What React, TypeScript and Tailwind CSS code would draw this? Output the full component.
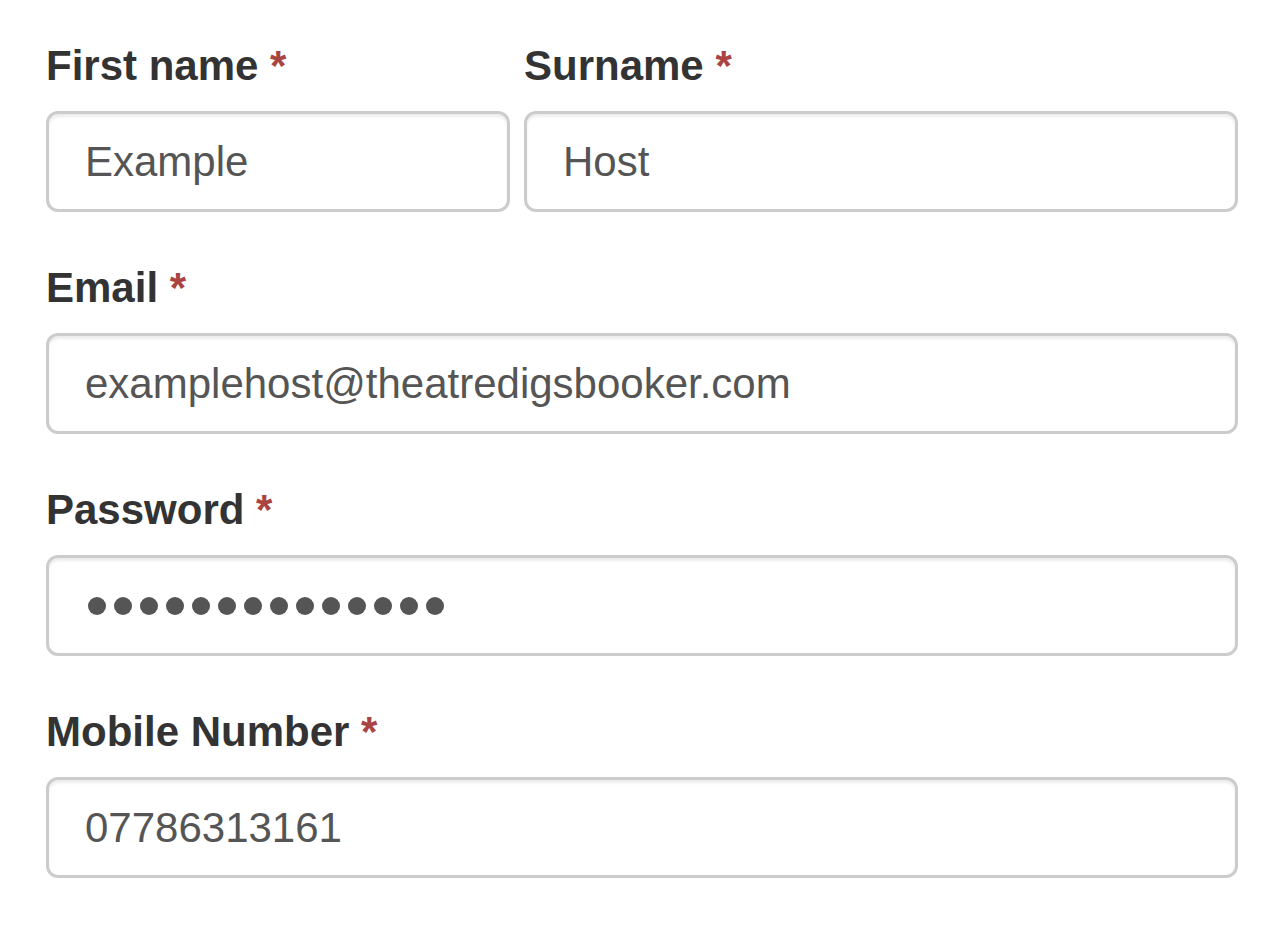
import React from "react";

const font = { fontFamily: '"Liberation Sans", Arial, Helvetica, sans-serif' };

function Label({ text }: { text: string }) {
  return (
    <label className="block mb-[15px] text-[42px] leading-[60px] font-bold text-[#333]">
      {text} <span className="text-[#a94442]">*</span>
    </label>
  );
}

const inputCls =
  "block w-full h-[101px] px-[36px] py-[17px] text-[42px] leading-[60px] text-[#555] bg-white border-[3px] border-solid border-[#ccc] rounded-[12px] shadow-[inset_0_3px_3px_rgba(0,0,0,0.075)] outline-none";

function Field({ label, value }: { label: string; value: string }) {
  return (
    <div className="mb-[46px]">
      <Label text={label} />
      <input className={inputCls} style={font} value={value} readOnly type="text" />
    </div>
  );
}

export default function App() {
  return (
    <div className="min-h-[932px] bg-white" style={font}>
      <div className="px-[46px] pt-[36px]">
        <div className="flex gap-[14px]">
          <div className="w-[464px] shrink-0">
            <Field label="First name" value="Example" />
          </div>
          <div className="flex-1">
            <Field label="Surname" value="Host" />
          </div>
        </div>
        <Field label="Email" value="examplehost@theatredigsbooker.com" />
        <div className="mb-[46px]">
          <Label text="Password" />
          <div
            className="flex items-center gap-[8px] w-full h-[101px] pl-[39px] pr-[36px] bg-white border-[3px] border-solid border-[#ccc] rounded-[12px] shadow-[inset_0_3px_3px_rgba(0,0,0,0.075)]"
            aria-label="password"
          >
            {Array.from({ length: 14 }).map((_, i) => (
              <div key={i} className="w-[18px] h-[18px] rounded-full bg-[#555]" />
            ))}
          </div>
        </div>
        <Field label="Mobile Number" value="07786313161" />
      </div>
    </div>
  );
}
